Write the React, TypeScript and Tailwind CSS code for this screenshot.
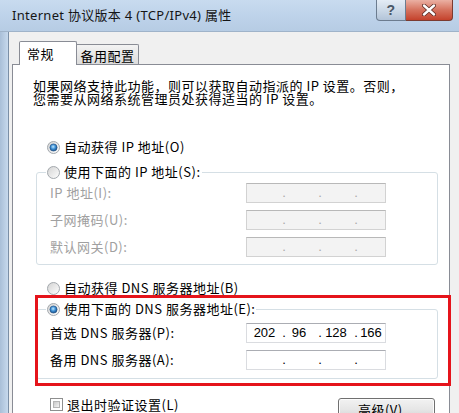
import React from "react";

function Radio({ checked }: { checked?: boolean }) {
  return (
    <svg width="13" height="13" viewBox="0 0 13 13" className="shrink-0">
      <defs>
        <linearGradient id="rbg" x1="0" y1="0" x2="1" y2="1">
          <stop offset="0" stopColor="#d2d2d2" />
          <stop offset="1" stopColor="#ffffff" />
        </linearGradient>
        <radialGradient id="rdot" cx="0.45" cy="0.4" r="0.7">
          <stop offset="0" stopColor="#bfe8ff" />
          <stop offset="0.45" stopColor="#3d8fd4" />
          <stop offset="1" stopColor="#0b3a70" />
        </radialGradient>
      </defs>
      <circle cx="6.5" cy="6.5" r="6" fill="url(#rbg)" stroke="#a3a8ad" strokeWidth="1" />
      {checked && <circle cx="6.5" cy="6.5" r="3.6" fill="url(#rdot)" stroke="#1b4c82" strokeWidth="0.6" />}
    </svg>
  );
}

function Checkbox() {
  return (
    <div className="w-[13px] h-[13px] shrink-0 border border-[#8e8f8f] bg-white p-[2px]">
      <div className="w-full h-full bg-linear-to-br from-[#c9c9c9] to-[#f4f4f4] border border-[#b5b5b5]" />
    </div>
  );
}

function IpBox({ values, disabled }: { values?: string[]; disabled?: boolean }) {
  const v = values ?? ["", "", "", ""];
  const dot = disabled ? "text-[#a8a8a8]" : "text-black";
  return (
    <div
      className={
        disabled
          ? "w-[140px] h-[20px] shrink-0 flex items-center bg-[#f3f3f3] border border-[#d2d2d2] border-t-[#b8b8b8] font-['Liberation_Sans',sans-serif] text-[13px] leading-[18px] tracking-normal"
          : "w-[140px] h-[20px] shrink-0 flex items-center bg-white border border-[#dadce0] border-t-[#abadb3] font-['Liberation_Sans',sans-serif] text-[13px] leading-[18px] tracking-normal"
      }
    >
      <span className="w-[35px] text-center">{v[0]}</span>
      <span className={`w-[4px] text-center ${dot}`}>.</span>
      <span className="w-[26px] text-center">{v[1]}</span>
      <span className="w-[6px]" />
      <span className={`w-[4px] text-center ${dot}`}>.</span>
      <span className="w-[28px] text-center">{v[2]}</span>
      <span className="w-[4px]" />
      <span className={`w-[4px] text-center ${dot}`}>.</span>
      <span className="w-[26px] text-center">{v[3]}</span>
    </div>
  );
}

function Row({ label, disabled, values }: { label: string; disabled?: boolean; values?: string[] }) {
  return (
    <div className="flex items-center h-[20px]">
      <div className={disabled ? "w-[196px] text-[#a0a0a0]" : "w-[196px] text-black"}>{label}</div>
      <IpBox disabled={disabled} values={values} />
    </div>
  );
}

export default function App() {
  return (
    <div className="w-[459px] h-[413px] overflow-hidden flex flex-col bg-[#f0f0f0] font-['Noto_Sans_CJK_SC',sans-serif] text-[13px] leading-[16px] tracking-[0.5px] text-black">
      {/* Title bar */}
      <div className="h-[32px] shrink-0 flex items-start bg-linear-to-b from-[#c8dbef] via-[#bed3ea] to-[#b6cce4] border-b border-[#9fb3c9]">
        <div className="pl-[12px] pt-[6px] leading-[18px] font-['Noto_Sans','Noto_Sans_CJK_SC',sans-serif] text-[13px] tracking-[0.3px] text-[#151515] whitespace-nowrap">
          Internet 协议版本 4 (TCP/IPv4) 属性
        </div>
        <div className="ml-auto mr-[6px] flex h-[21px]">
          <div className="w-[30px] h-[21px] flex items-center justify-center border border-t-0 border-[#6c7c8f] rounded-bl-[4px] bg-linear-to-b from-[#e4ecf5] via-[#ccd9e7] to-[#b3c4d8] font-['Liberation_Sans',sans-serif] font-bold text-[14px] text-[#4a5666]">
            ?
          </div>
          <div className="w-[47px] h-[21px] flex items-center justify-center border border-t-0 border-l-0 border-[#7b3b30] rounded-br-[4px] bg-linear-to-b from-[#eab0a3] via-[#d5725e] to-[#c4412b]">
            <svg width="14" height="12" viewBox="0 0 14 12">
              <path d="M2 1.5 L12 10.5 M12 1.5 L2 10.5" stroke="#5a2a22" strokeWidth="4" strokeLinecap="round" />
              <path d="M2 1.5 L12 10.5 M12 1.5 L2 10.5" stroke="#ffffff" strokeWidth="2.4" strokeLinecap="round" />
            </svg>
          </div>
        </div>
      </div>

      {/* Body */}
      <div className="flex-1 flex min-h-0">
        <div className="w-[9px] shrink-0 bg-linear-to-r from-[#a9bfd8] to-[#c7d9ed] border-r border-[#7b8fa6]" />
        <div className="flex-1 flex flex-col pt-[9px] pl-[3px] pr-[9px]">
          {/* Tabs */}
          <div className="flex h-[23px] shrink-0 pl-[7px] items-start">
            <div className="relative z-10 w-[58px] h-[24px] bg-white border border-b-0 border-[#898c95] rounded-t-[2px] flex items-center pl-[7px]">
              常规
            </div>
            <div className="mt-[3px] w-[62px] h-[20px] border border-l-0 border-b-0 border-[#898c95] rounded-tr-[2px] bg-linear-to-b from-[#f3f3f3] to-[#dcdcdc] flex items-center justify-center pt-[3px]">
              备用配置
            </div>
          </div>

          {/* Panel */}
          <div className="relative h-[400px] shrink-0 border border-[#898c95] bg-white">
            <p className="mt-[14px] ml-[20px] leading-[13px] whitespace-nowrap">
              如果网络支持此功能，则可以获取自动指派的 IP 设置。否则，
              <br />
              您需要从网络系统管理员处获得适当的 IP 设置。
            </p>

            <div className="mt-[34px] ml-[34px] flex items-center gap-[4px] h-[16px]">
              <Radio checked />
              <span>自动获得 IP 地址(O)</span>
            </div>

            <fieldset className="mt-[9px] ml-[23px] w-[402px] border border-[#d5dfe5] rounded-[3px] pl-[9px] pt-[3px] pb-[7px]">
              <legend className="px-[1px]">
                <div className="flex items-center gap-[4px] h-[16px]">
                  <Radio />
                  <span>使用下面的 IP 地址(S):</span>
                </div>
              </legend>
              <div className="ml-[4px] flex flex-col gap-[7px]">
                <Row label="IP 地址(I):" disabled />
                <Row label="子网掩码(U):" disabled />
                <Row label="默认网关(D):" disabled />
              </div>
            </fieldset>

            <div className="mt-[15px] ml-[34px] flex items-center gap-[4px] h-[16px]">
              <Radio />
              <span>自动获得 DNS 服务器地址(B)</span>
            </div>

            <fieldset className="mt-[5px] ml-[23px] w-[402px] border border-[#d5dfe5] rounded-[3px] pl-[9px] pt-[6px] pb-[8px]">
              <legend className="px-[1px]">
                <div className="flex items-center gap-[4px] h-[16px]">
                  <Radio checked />
                  <span>使用下面的 DNS 服务器地址(E):</span>
                </div>
              </legend>
              <div className="ml-[4px] flex flex-col gap-[7px]">
                <Row label="首选 DNS 服务器(P):" values={["202", "96", "128", "166"]} />
                <Row label="备用 DNS 服务器(A):" />
              </div>
            </fieldset>

            <div className="mt-[19px] flex justify-between items-start">
              <div className="ml-[37px] flex items-center gap-[4px] h-[13px]">
                <Checkbox />
                <span>退出时验证设置(L)</span>
              </div>
              <div className="mr-[14px] w-[97px] h-[23px] rounded-[3px] border border-[#707070] bg-linear-to-b from-[#f2f2f2] via-[#e6e6e6] to-[#cfcfcf] flex items-center justify-center shadow-[inset_0_0_0_1px_#fcfcfc]">
                高级(V)...
              </div>
            </div>

            {/* Red annotation box */}
            <div className="pointer-events-none absolute left-[22px] top-[230px] w-[416px] h-[91px] border-[3px] border-[#e5141b]" />
          </div>
        </div>
      </div>
    </div>
  );
}
